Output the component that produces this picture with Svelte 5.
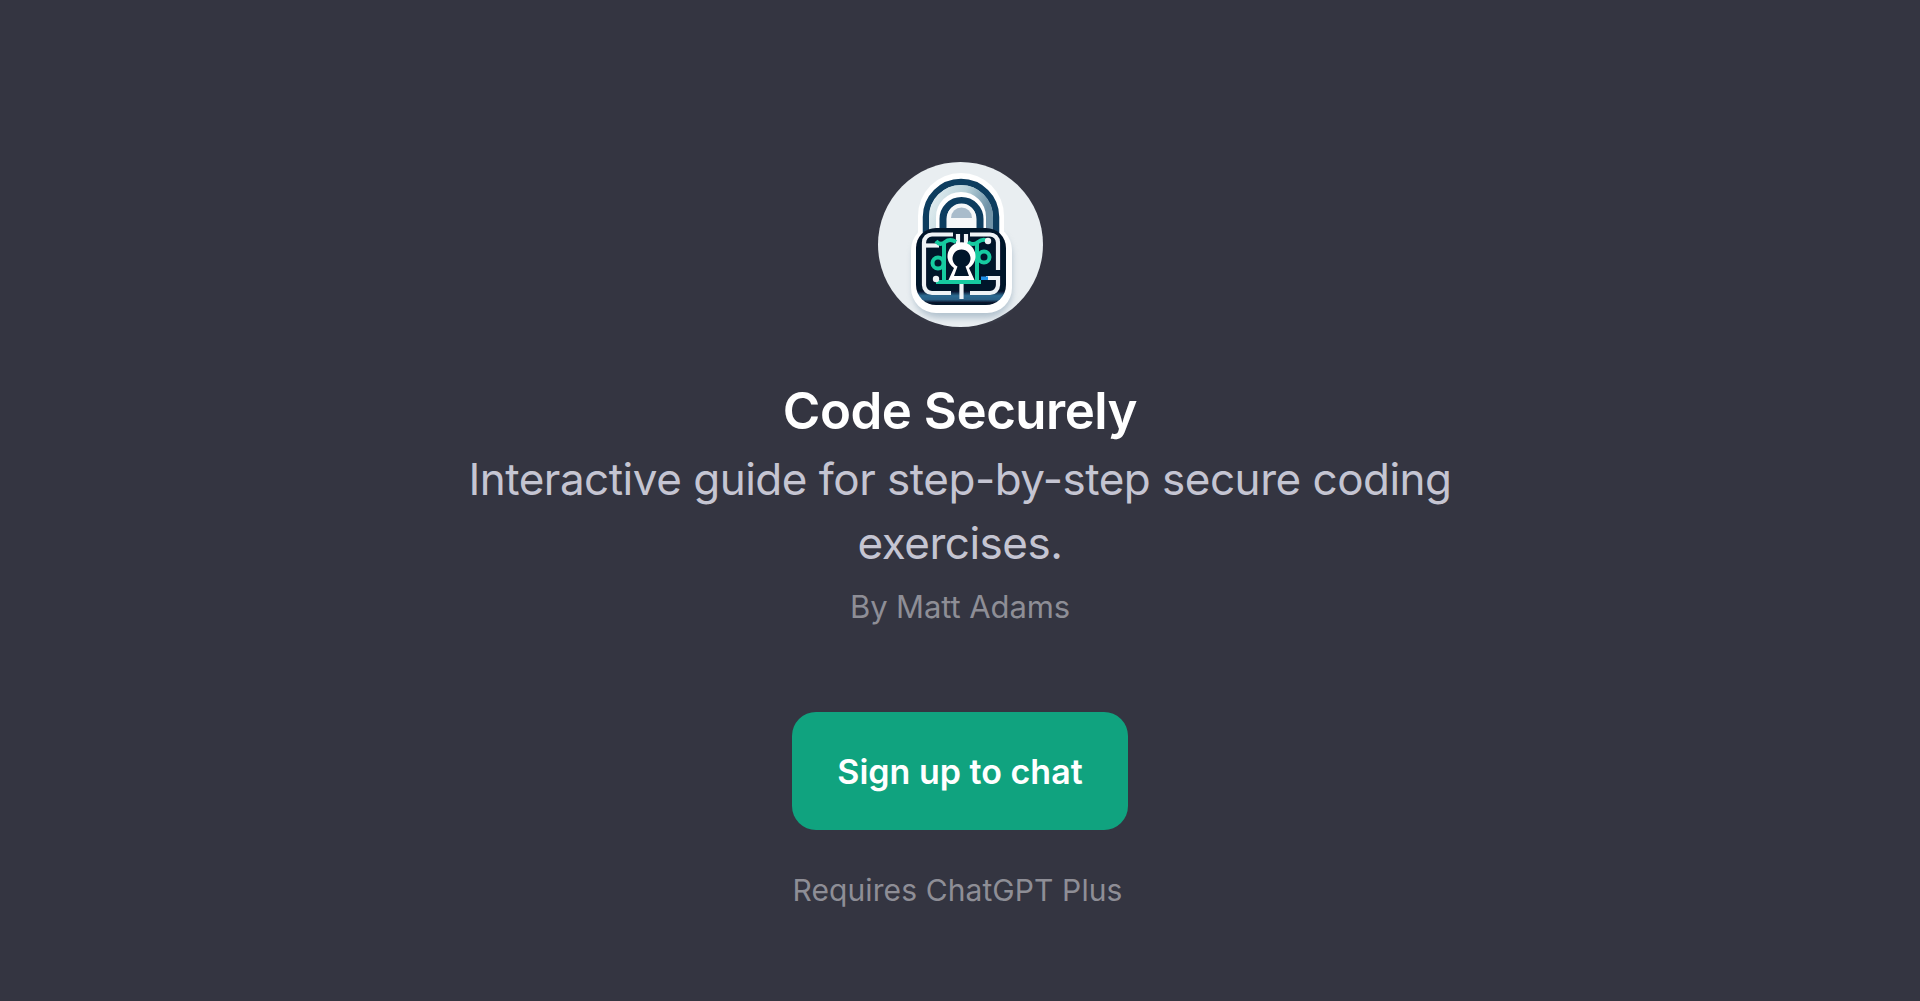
<script>
  const title = 'Code Securely';
  const description = 'Interactive guide for step-by-step secure coding exercises.';
  const author = 'Matt Adams';
</script>

<main class="page">
  <div class="avatar">
    <svg viewBox="0 0 165 165" width="165" height="165" aria-label="Padlock logo">
      <defs>
        <linearGradient id="band" x1="0" y1="0" x2="1" y2="0.3">
          <stop offset="0" stop-color="#e3eef1" />
          <stop offset="0.55" stop-color="#b9d2da" />
          <stop offset="1" stop-color="#6f93a8" />
        </linearGradient>
        <linearGradient id="base" x1="0" y1="0" x2="0" y2="1">
          <stop offset="0" stop-color="#061229" />
          <stop offset="0.82" stop-color="#061229" />
          <stop offset="0.88" stop-color="#2d6a91" />
          <stop offset="0.93" stop-color="#2a5f85" />
          <stop offset="0.97" stop-color="#061229" />
        </linearGradient>
        <filter id="blur" x="-20%" y="-20%" width="140%" height="140%">
          <feGaussianBlur stdDeviation="3" />
        </filter>
        <filter id="soft" x="-5%" y="-5%" width="110%" height="110%">
          <feGaussianBlur stdDeviation="0.35" />
        </filter>
      </defs>
      <circle cx="82.5" cy="82.5" r="82.5" fill="#e9eef1" />
      <rect x="35" y="68" width="99" height="88" rx="26" fill="#8fa6b8" opacity="0.6" filter="url(#blur)" />
      <g filter="url(#soft)">
        <!-- white sticker outline -->
        <path d="M40 72V54a43 43 0 0 1 86 0V72Z" fill="#fff" />
        <rect x="33" y="63" width="101" height="88" rx="25" fill="#fff" />
        <!-- shackle -->
        <path d="M48 72V55a35 35 0 0 1 70 0V72" fill="none" stroke="#0e3c5e" stroke-width="6.5" />
        <path d="M54.500 72V55a28.500 28.500 0 0 1 57 0V72" fill="none" stroke="url(#band)" stroke-width="7" />
        <path d="M65 72V57a18.500 18.500 0 0 1 37 0V72" fill="none" stroke="#0e3c5e" stroke-width="7" />
        <path d="M69 66V56a14.500 14.500 0 0 1 29 0V66Z" fill="#f6f8f9" />
        <path d="M73 56a10.500 10.500 0 0 1 21 0Z" fill="#a9bccb" />
        <!-- lock body -->
        <rect x="38" y="66" width="90" height="77" rx="20" fill="url(#base)" />
        <!-- circuit traces -->
        <g fill="none" stroke="#eef3f6" stroke-width="4.2">
          <path d="M75 72.500H54a8 8 0 0 0-8 8V123a8 8 0 0 0 8 8H73" />
          <path d="M46 83.500H61" />
          <path d="M80 72V86" />
          <path d="M88 72V86" />
          <path d="M92 72.500H112a8 8 0 0 1 8 8V108" />
          <path d="M108 116H120V123a8 8 0 0 1-8 8H92" />
          <path d="M83.500 121V137" />
        </g>
        <!-- green circuit -->
        <g fill="none" stroke="#14cba0" stroke-width="4">
          <path d="M66 80V120" />
          <path d="M99 80V120" />
          <path d="M58 79Q62 84 67 80T78 80" />
          <path d="M90 80Q95 84 100 80T110 79" />
          <path d="M58 120H103" />
          <circle cx="60" cy="101" r="5.500" />
          <circle cx="106" cy="95" r="5.500" />
        </g>
        <rect x="103" y="114.500" width="7" height="3.500" fill="#1f8fe8" />
        <circle cx="58" cy="117" r="3.200" fill="#eef3f6" />
        <circle cx="110" cy="79" r="3.200" fill="#eef3f6" />
        <!-- keyhole -->
        <path d="M70.500 118 76 106a14 14 0 1 1 15 0L96.500 118Z" fill="#fff" />
        <path d="M76 114 79.500 104.500a9 9 0 1 1 8 0L91 114Z" fill="#061229" />
      </g>
    </svg>
  </div>

  <h1 class="title">{title}</h1>
  <p class="description">{description}</p>
  <p class="author">By {author}</p>

  <button class="signup">Sign up to chat</button>
  <p class="requires">Requires ChatGPT Plus</p>
</main>

<style>
  :global(body) {
    margin: 0;
    background: #343541;
  }

  .page {
    box-sizing: border-box;
    height: 1001px;
    padding-top: 162px;
    display: flex;
    flex-direction: column;
    align-items: center;
    font-family: Inter, "Liberation Sans", sans-serif;
    overflow: hidden;
  }

  .avatar {
    width: 165px;
    height: 165px;
  }

  .avatar svg {
    display: block;
  }

  .title {
    margin: 54px 0 0;
    font-size: 51px;
    line-height: 60px;
    font-weight: 600;
    letter-spacing: -0.5px;
    color: #fff;
  }

  .description {
    width: 1000px;
    margin: 6px 0 0;
    font-size: 44px;
    line-height: 64px;
    letter-spacing: -0.5px;
    text-align: center;
    color: #c5c5d2;
  }

  .author {
    margin: 12px 0 0;
    font-size: 31px;
    line-height: 40px;
    letter-spacing: -0.1px;
    color: #8e8e96;
  }

  .signup {
    width: 336px;
    height: 118px;
    margin-top: 85px;
    border: none;
    border-radius: 24px;
    background: #10a37f;
    color: #fff;
    font-family: inherit;
    font-size: 34px;
    font-weight: 600;
  }

  .requires {
    margin: 40px 0 0;
    padding-right: 5px;
    font-size: 30px;
    line-height: 40px;
    letter-spacing: 0.1px;
    color: #8e8e96;
  }
</style>
